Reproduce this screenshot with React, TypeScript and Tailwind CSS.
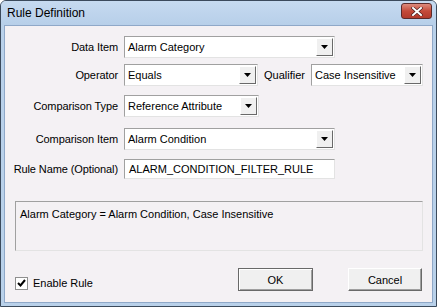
import React from 'react';

const ui = { fontFamily: '"Liberation Sans", Arial, sans-serif' };

function Combo({ value, width }: { value: string; width: string }) {
  return (
    <div className={`${width} h-[22px] flex items-stretch bg-white border border-t-[#a0a0a0] border-l-[#a0a0a0] border-r-[#e3e3e3] border-b-[#e3e3e3]`}>
      <div className="flex-1 flex items-center pl-[3px] text-[11px] text-black whitespace-nowrap overflow-hidden">{value}</div>
      <div className="w-[17px] m-[1px] flex items-center justify-center bg-[#f0f0f0] border border-t-white border-l-white border-r-[#696969] border-b-[#696969]">
        <svg width="7" height="4" viewBox="0 0 7 4"><path d="M0 0h7L3.5 4z" fill="#000" /></svg>
      </div>
    </div>
  );
}

function Row({ label, children, className }: { label: string; children: React.ReactNode; className?: string }) {
  return (
    <div className={`flex items-center ${className ?? ''}`}>
      <div className="w-[113px] text-right text-[11px] text-black whitespace-nowrap tracking-[-0.1px]">{label}</div>
      <div className="ml-[6px] flex items-center">{children}</div>
    </div>
  );
}

export default function App() {
  return (
    <div style={ui} className="w-[437px] h-[307px] flex flex-col bg-[#b9d1ea] border border-[#3b4a5c] rounded-t-[6px] overflow-hidden">
      <div className="h-[24px] flex items-center justify-between pl-[6px] pr-[4px] bg-gradient-to-b from-[#c6daf0] to-[#b7cfe9]">
        <span className="text-[12px] text-black">Rule Definition</span>
        <div className="w-[31px] h-[16px] -mt-[4px] rounded-[3px] border border-[#5b2a2a] bg-gradient-to-b from-[#dc8a7c] via-[#c44a3a] to-[#b23a2c] flex items-center justify-center">
          <svg width="12" height="9" viewBox="0 0 12 9">
            <path d="M2 1l8 7M10 1L2 8" stroke="#4a1e1e" strokeWidth="3.2" strokeLinecap="square" />
            <path d="M2 1l8 7M10 1L2 8" stroke="#fff" strokeWidth="2" strokeLinecap="square" />
          </svg>
        </div>
      </div>
      <div className="flex-1 mx-[3px] mb-[3px] bg-[#f4f1f4] border border-[#8fa8c8] flex flex-col">
        <Row label="Data Item" className="mt-[10px]">
          <Combo value="Alarm Category" width="w-[211px]" />
        </Row>
        <Row label="Operator" className="mt-[6px]">
          <Combo value="Equals" width="w-[134px]" />
          <span className="ml-[6px] w-[41px] text-[11px]">Qualifier</span>
          <div className="ml-[6px]"><Combo value="Case Insensitive" width="w-[112px]" /></div>
        </Row>
        <Row label="Comparison Type" className="mt-[9px]">
          <Combo value="Reference Attribute" width="w-[135px]" />
        </Row>
        <Row label="Comparison Item" className="mt-[11px]">
          <Combo value="Alarm Condition" width="w-[211px]" />
        </Row>
        <Row label="Rule Name (Optional)" className="mt-[9px]">
          <div className="w-[211px] h-[20px] flex items-center pl-[4px] bg-white border border-t-[#a0a0a0] border-l-[#a0a0a0] border-r-[#e3e3e3] border-b-[#e3e3e3] text-[11px]">
            ALARM_CONDITION_FILTER_RULE
          </div>
        </Row>
        <div className="mt-[22px] ml-[10px] w-[408px] h-[50px] border border-t-[#a0a0a0] border-l-[#a0a0a0] border-r-[#e3e3e3] border-b-[#e3e3e3] px-[4px] pt-[4px] text-[11px]">
          Alarm Category = Alarm Condition, Case Insensitive
        </div>
        <div className="mt-[17px] flex items-center pl-[10px] pr-[10px]">
          <div className="flex items-center mt-[7px]">
            <div className="w-[13px] h-[13px] bg-white border border-[#8f8f8f] flex items-center justify-center">
              <svg width="9" height="8" viewBox="0 0 9 8"><path d="M1 4l2.5 2.5L8 1" stroke="#000" strokeWidth="2" fill="none" /></svg>
            </div>
            <span className="ml-[5px] text-[11px]">Enable Rule</span>
          </div>
          <div className="ml-auto flex gap-[35px]">
            <button className="w-[75px] h-[23px] bg-[#f0f0f0] border border-[#696969] shadow-[inset_1px_1px_0_#ffffff,inset_-1px_-1px_0_#a0a0a0] text-[11px]">OK</button>
            <button className="w-[74px] h-[23px] bg-[#f0f0f0] border border-t-white border-l-white border-r-[#696969] border-b-[#696969] shadow-[inset_-1px_-1px_0_#a0a0a0] text-[11px]">Cancel</button>
          </div>
        </div>
      </div>
    </div>
  );
}
